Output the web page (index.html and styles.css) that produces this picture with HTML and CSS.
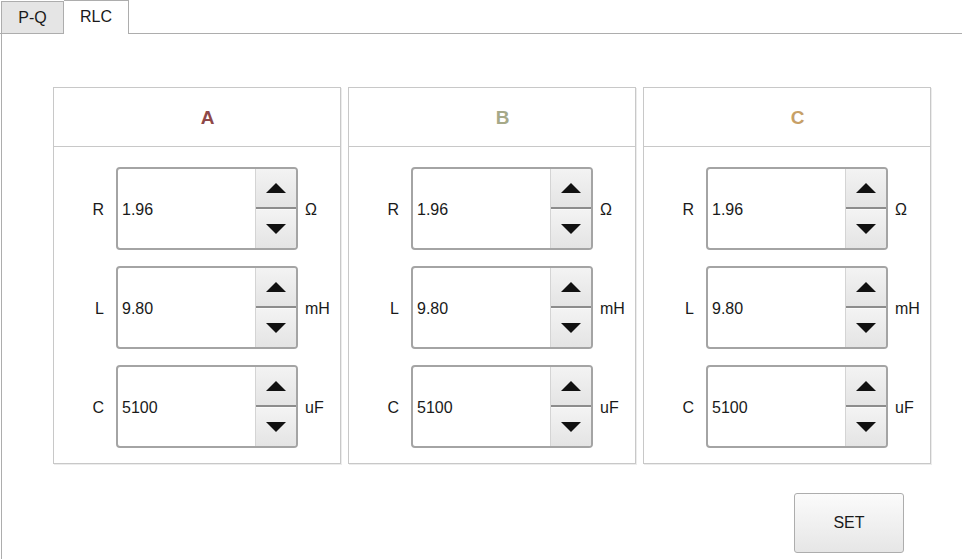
FILE: index.html
```html
<!DOCTYPE html>
<html>
<head>
    <title>RLC</title>
    <link rel="stylesheet" href="styles.css">
</head>
<body>
    <div class="tabbar">
        <div class="tab">P-Q</div>
        <div class="tab active">RLC</div>
    </div>

    <div class="page">
        <div class="phases">
            <!-- 相 A -->
            <div class="phase">
                <div class="phase-head phase-a">A</div>
                <div class="phase-body">
                    <div class="row">
                        <span class="label">R</span>
                        <div class="spin">
                            <div class="spin-value">1.96</div>
                            <div class="spin-btns">
                                <div class="spin-up"><i class="tri-up"></i></div>
                                <div class="spin-down"><i class="tri-down"></i></div>
                            </div>
                        </div>
                        <span class="unit">Ω</span>
                    </div>
                    <div class="row">
                        <span class="label">L</span>
                        <div class="spin">
                            <div class="spin-value">9.80</div>
                            <div class="spin-btns">
                                <div class="spin-up"><i class="tri-up"></i></div>
                                <div class="spin-down"><i class="tri-down"></i></div>
                            </div>
                        </div>
                        <span class="unit">mH</span>
                    </div>
                    <div class="row">
                        <span class="label">C</span>
                        <div class="spin">
                            <div class="spin-value">5100</div>
                            <div class="spin-btns">
                                <div class="spin-up"><i class="tri-up"></i></div>
                                <div class="spin-down"><i class="tri-down"></i></div>
                            </div>
                        </div>
                        <span class="unit">uF</span>
                    </div>
                </div>
            </div>

            <!-- 相 B -->
            <div class="phase">
                <div class="phase-head phase-b">B</div>
                <div class="phase-body">
                    <div class="row">
                        <span class="label">R</span>
                        <div class="spin">
                            <div class="spin-value">1.96</div>
                            <div class="spin-btns">
                                <div class="spin-up"><i class="tri-up"></i></div>
                                <div class="spin-down"><i class="tri-down"></i></div>
                            </div>
                        </div>
                        <span class="unit">Ω</span>
                    </div>
                    <div class="row">
                        <span class="label">L</span>
                        <div class="spin">
                            <div class="spin-value">9.80</div>
                            <div class="spin-btns">
                                <div class="spin-up"><i class="tri-up"></i></div>
                                <div class="spin-down"><i class="tri-down"></i></div>
                            </div>
                        </div>
                        <span class="unit">mH</span>
                    </div>
                    <div class="row">
                        <span class="label">C</span>
                        <div class="spin">
                            <div class="spin-value">5100</div>
                            <div class="spin-btns">
                                <div class="spin-up"><i class="tri-up"></i></div>
                                <div class="spin-down"><i class="tri-down"></i></div>
                            </div>
                        </div>
                        <span class="unit">uF</span>
                    </div>
                </div>
            </div>

            <!-- 相 C -->
            <div class="phase">
                <div class="phase-head phase-c">C</div>
                <div class="phase-body">
                    <div class="row">
                        <span class="label">R</span>
                        <div class="spin">
                            <div class="spin-value">1.96</div>
                            <div class="spin-btns">
                                <div class="spin-up"><i class="tri-up"></i></div>
                                <div class="spin-down"><i class="tri-down"></i></div>
                            </div>
                        </div>
                        <span class="unit">Ω</span>
                    </div>
                    <div class="row">
                        <span class="label">L</span>
                        <div class="spin">
                            <div class="spin-value">9.80</div>
                            <div class="spin-btns">
                                <div class="spin-up"><i class="tri-up"></i></div>
                                <div class="spin-down"><i class="tri-down"></i></div>
                            </div>
                        </div>
                        <span class="unit">mH</span>
                    </div>
                    <div class="row">
                        <span class="label">C</span>
                        <div class="spin">
                            <div class="spin-value">5100</div>
                            <div class="spin-btns">
                                <div class="spin-up"><i class="tri-up"></i></div>
                                <div class="spin-down"><i class="tri-down"></i></div>
                            </div>
                        </div>
                        <span class="unit">uF</span>
                    </div>
                </div>
            </div>
        </div>

        <div class="footer">
            <button class="set-btn">SET</button>
        </div>
    </div>
</body>
</html>
```

FILE: styles.css
```css
* {
    box-sizing: border-box;
}
body {
    margin: 0;
    background: #fff;
    font-family: 'Liberation Sans', Arial, sans-serif;
    font-size: 16px;
    color: #1a1a1a;
}

/* 标签页 */
.tabbar {
    display: flex;
    align-items: flex-end;
    height: 34px;
    padding-left: 1px;
    border-bottom: 1px solid #adadad;
}
.tab {
    display: flex;
    align-items: center;
    justify-content: center;
    width: 63px;
    height: 32px;
    background: #e5e5e5;
    border: 1px solid #adadad;
    border-bottom: none;
}
.tab.active {
    width: 65px;
    height: 34px;
    margin-bottom: -1px;
    padding-bottom: 2px;
    background: #fff;
    border-left: none;
}

/* 内容区 */
.page {
    margin-left: 1px;
    min-height: 525px;
    border-left: 1px solid #adadad;
    padding: 53px 0 0 51px;
}
.phases {
    display: grid;
    grid-template-columns: repeat(3, 288px);
    gap: 7px;
}
.phase {
    border: 1px solid #c8c8c8;
    box-shadow: 1px 1px 0 #ececec;
}
.phase-head {
    height: 59px;
    border-bottom: 1px solid #c8c8c8;
    display: flex;
    align-items: center;
    justify-content: center;
    padding: 2px 0 0 21px;
    font-size: 19px;
    font-weight: bold;
}
.phase-a { color: #8e4848; }
.phase-b { color: #a6a988; }
.phase-c { color: #c7a066; }

.phase-body {
    padding: 20px 0 15px;
    display: flex;
    flex-direction: column;
    gap: 16px;
}
.row {
    display: flex;
    align-items: center;
}
.label {
    width: 50px;
    text-align: right;
    margin-right: 12px;
    padding-top: 3px;
}
.unit {
    margin-left: 7px;
    padding-top: 3px;
}

/* 数值框 */
.spin {
    display: flex;
    width: 182px;
    height: 83px;
    border: 2px solid #a4a4a4;
    border-radius: 4px;
    background: #fff;
    overflow: hidden;
}
.spin-value {
    flex: 1;
    display: flex;
    align-items: center;
    padding-left: 4px;
    padding-top: 3px;
}
.spin-btns {
    width: 41px;
    display: flex;
    flex-direction: column;
    border-left: 1px solid #d4d4d4;
}
.spin-up, .spin-down {
    flex: 1;
    display: flex;
    align-items: center;
    justify-content: center;
    background: linear-gradient(#f3f3f3, #e4e4e4);
}
.spin-up {
    border-bottom: 2px solid #8c8c8c;
}
.spin-down {
    border-top: 1px solid #fafafa;
}
.tri-up {
    border-left: 10px solid transparent;
    border-right: 10px solid transparent;
    border-bottom: 10px solid #111;
}
.tri-down {
    border-left: 10px solid transparent;
    border-right: 10px solid transparent;
    border-top: 10px solid #111;
}

/* 设置按钮 */
.footer {
    display: flex;
    justify-content: flex-end;
    padding: 29px 58px 0 0;
}
.set-btn {
    width: 110px;
    height: 60px;
    font-family: inherit;
    font-size: 16px;
    color: #1a1a1a;
    background: linear-gradient(#fbfbfb, #e6e6e6);
    border: 1px solid #adadad;
    border-radius: 3px;
}
```
